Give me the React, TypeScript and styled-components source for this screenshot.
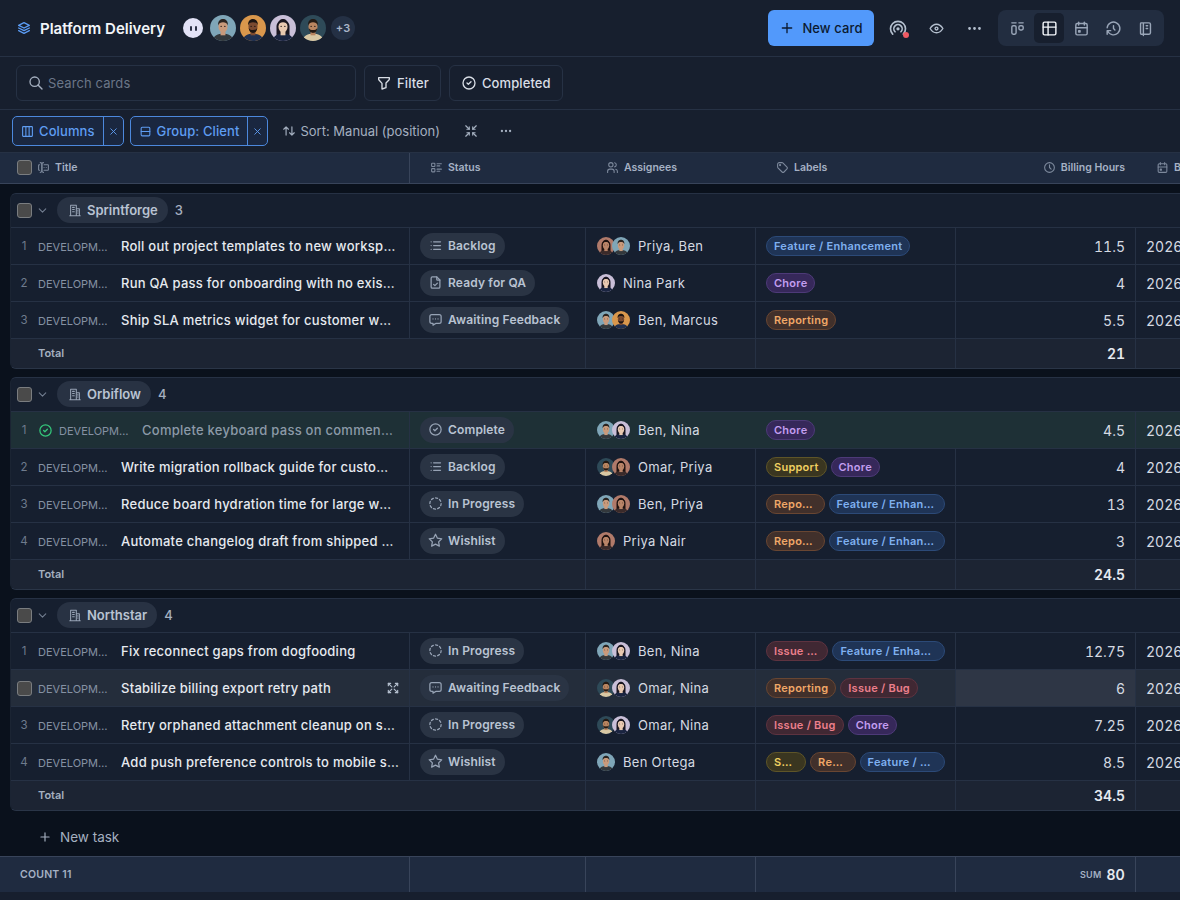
import React from "react";
import styled, { createGlobalStyle } from "styled-components";
import {
  TbArrowsMaximize,
  TbArrowsMinimize,
  TbArrowsSort,
  TbBroadcast,
  TbCalendarEvent,
  TbChevronDown,
  TbCircleCheck,
  TbCircleDashed,
  TbClock,
  TbColumns3,
  TbDots,
  TbEye,
  TbFileCheck,
  TbFilter,
  TbForms,
  TbHistory,
  TbLayoutKanban,
  TbLayoutRows,
  TbList,
  TbListDetails,
  TbMessageDots,
  TbNotebook,
  TbPlus,
  TbSearch,
  TbStack2,
  TbStar,
  TbTable,
  TbTag,
  TbUsers,
  TbX,
} from "react-icons/tb";

const GRID = "400px 176px 170px 200px 180px 240px";
const line = "#263144";

const GlobalStyle = createGlobalStyle`
  html, body { margin: 0; height: 100%; background: #171f2e; }
  body { font-family: Inter, "Liberation Sans", sans-serif; overflow: hidden; }
  * { box-sizing: border-box; }
`;

const Page = styled.div`
  width: 1180px;
  height: 900px;
  display: flex;
  flex-direction: column;
  background: #171f2e;
  color: #e4e8ef;
  overflow: hidden;
`;

const TopBar = styled.header`
  height: 57px;
  flex: none;
  display: flex;
  align-items: center;
  padding: 0 16px;
  border-bottom: 1px solid ${line};
`;

const BoardTitle = styled.h1`
  display: flex;
  align-items: center;
  gap: 8px;
  margin: 0;
  font-size: 15px;
  font-weight: 600;
  color: #f2f5f9;
  svg { color: #5b9cf5; }
`;

const People = styled.div`
  display: flex;
  align-items: center;
  gap: 4px;
  margin-left: 18px;
`;

const Bot = styled.span`
  width: 20px;
  height: 20px;
  margin-right: 3px;
  border-radius: 50%;
  background: #e2e2f6;
  display: flex;
  align-items: center;
  justify-content: center;
  gap: 3px;
  i { width: 2px; height: 5px; border-radius: 1px; background: #2b3045; }
`;

const MoreCount = styled.span`
  width: 24px;
  height: 24px;
  margin-left: 1px;
  border-radius: 50%;
  background: #243044;
  color: #a9b5c8;
  font-size: 11px;
  font-weight: 600;
  display: flex;
  align-items: center;
  justify-content: center;
`;

const TopActions = styled.div`
  margin-left: auto;
  display: flex;
  align-items: center;
`;

const PrimaryButton = styled.button`
  width: 106px;
  height: 36px;
  margin-right: 5px;
  border: 0;
  border-radius: 6px;
  background: #5299fb;
  color: #0b1a30;
  font: 500 13px Inter, sans-serif;
  letter-spacing: 0.1px;
  display: flex;
  align-items: center;
  justify-content: center;
  gap: 7px;
`;

const IconButton = styled.span`
  width: 38px;
  height: 36px;
  position: relative;
  display: flex;
  align-items: center;
  justify-content: center;
  color: #b4bfce;
`;

const LiveDot = styled.i`
  position: absolute;
  right: 8px;
  bottom: 8px;
  width: 6px;
  height: 6px;
  border-radius: 50%;
  background: #ef5a63;
`;

const ViewSwitch = styled.div`
  width: 166px;
  height: 36px;
  margin-left: 5px;
  padding: 0 4px;
  border-radius: 8px;
  background: #222d40;
  display: flex;
  align-items: center;
  gap: 2px;
`;

const ViewTab = styled.span<{ $active?: boolean }>`
  width: 30px;
  height: 30px;
  border-radius: 5px;
  display: flex;
  align-items: center;
  justify-content: center;
  background: ${(p) => (p.$active ? "#171f2e" : "transparent")};
  color: ${(p) => (p.$active ? "#f2f5f9" : "#9aa6b8")};
`;

const SearchBar = styled.div`
  height: 53px;
  flex: none;
  display: flex;
  align-items: center;
  gap: 8px;
  padding: 0 16px;
  border-bottom: 1px solid ${line};
`;

const SearchField = styled.div`
  width: 340px;
  height: 36px;
  padding: 0 11px;
  border: 1px solid ${line};
  border-radius: 6px;
  display: flex;
  align-items: center;
  gap: 4px;
  color: #a5b0c0;
  font-size: 13px;
  letter-spacing: 0.1px;
  span { color: #6b7688; }
`;

const GhostButton = styled.button`
  height: 36px;
  padding: 0 11px;
  border: 1px solid ${line};
  border-radius: 6px;
  background: transparent;
  color: #d9dee6;
  font: 500 13px Inter, sans-serif;
  letter-spacing: 0.1px;
  display: flex;
  align-items: center;
  gap: 5px;
`;

const ViewBar = styled.div`
  height: 42px;
  flex: none;
  display: flex;
  align-items: center;
  padding: 0 12px;
`;

const Chip = styled.div`
  height: 30px;
  margin-right: 6px;
  border: 1px solid #4c88dd;
  border-radius: 5px;
  background: #1a2740;
  color: #5f9df2;
  display: flex;
  align-items: stretch;
  font-size: 13px;
  font-weight: 500;
  letter-spacing: 0.1px;
`;

const ChipLabel = styled.span`
  display: flex;
  align-items: center;
  gap: 5px;
  padding: 0 8px;
  border-right: 1px solid #4c88dd;
`;

const ChipClose = styled.span`
  width: 19px;
  display: flex;
  align-items: center;
  justify-content: center;
`;

const SortLabel = styled.span`
  display: flex;
  align-items: center;
  gap: 4px;
  margin-left: 8px;
  color: #a5b0c0;
  font-size: 13px;
`;

const BarIcon = styled.span<{ $left: number }>`
  display: flex;
  margin-left: ${(p) => p.$left}px;
  color: #a5b0c0;
`;

const GridRow = styled.div`
  display: grid;
  grid-template-columns: ${GRID};
  width: 1200px;
`;

const HeaderRow = styled(GridRow)`
  flex: none;
  width: 100%;
  height: 32px;
  padding-left: 10px;
  background: #1f2b40;
  border-top: 1px solid ${line};
  border-bottom: 1px solid #38445a;
`;

const HeaderCell = styled.div<{ $right?: boolean; $pad: number; $divider?: boolean }>`
  display: flex;
  align-items: center;
  justify-content: ${(p) => (p.$right ? "flex-end" : "flex-start")};
  gap: 5px;
  padding: ${(p) => (p.$right ? `0 10px 1px 0` : `0 0 1px ${p.$pad}px`)};
  color: #a5b1c4;
  font-size: 10.5px;
  font-weight: 600;
  white-space: nowrap;
  border-right: 1px solid ${(p) => (p.$divider ? "#38445a" : "transparent")};
  svg { color: #7d899c; flex: none; }
`;

const Checkbox = styled.span`
  width: 15px;
  height: 15px;
  flex: none;
  border: 1px solid #7a7d80;
  border-radius: 3px;
  background: #4a4a4a;
`;

const Board = styled.main`
  flex: 1;
  min-height: 0;
  padding: 9px 0 0 10px;
  background: #0a111c;
  display: flex;
  flex-direction: column;
  gap: 8px;
  overflow: hidden;
`;

const GroupBox = styled.section`
  width: 1200px;
  border-top: 1px solid ${line};
  border-bottom: 1px solid #2a3547;
  border-left: 1px solid #1b2433;
  border-radius: 6px 0 0 6px;
  background: #161f2f;
  overflow: hidden;
`;

const GroupHead = styled.div`
  height: 34px;
  display: flex;
  align-items: center;
  padding: 0 0 1px 6px;
  border-bottom: 1px solid ${line};
  color: #a5b0c0;
  font-size: 13px;
  font-weight: 500;
`;

const Collapse = styled.span`
  display: flex;
  margin: 0 8px 0 4px;
  color: #727e90;
`;

const ClientPill = styled.span`
  height: 26px;
  padding: 0 10px 0 11px;
  margin-right: 7px;
  border-radius: 13px;
  background: #283243;
  color: #b9c3d2;
  font-weight: 600;
  display: flex;
  align-items: center;
  gap: 5px;
  svg { color: #97a3b5; }
`;

const RowShell = styled(GridRow)<{ $state?: "done" | "hover" }>`
  height: 37px;
  margin-left: -1px;
  border-bottom: 1px solid ${line};
  background: ${(p) =>
    p.$state === "done" ? "#1e3036" : p.$state === "hover" ? "#242d3b" : "#161f2f"};
`;

const Cell = styled.div<{ $hideLine?: boolean; $focus?: boolean }>`
  min-width: 0;
  display: flex;
  align-items: center;
  border-right: 1px solid ${(p) => (p.$hideLine ? "transparent" : line)};
  background: ${(p) => (p.$focus ? "#2e3645" : "transparent")};
`;

const TitleCell = styled(Cell)`
  padding-right: 10px;
`;

const RowIndex = styled.span`
  width: 28px;
  flex: none;
  text-align: center;
  color: #6f7b8d;
  font-size: 11.5px;
`;

const HoverBox = styled.span`
  width: 28px;
  flex: none;
  display: flex;
  justify-content: flex-end;
  padding-right: 6px;
`;

const DoneMark = styled.span`
  display: flex;
  width: 21px;
  flex: none;
  color: #34c77b;
`;

const CardKey = styled.span`
  width: 72px;
  flex: none;
  margin-right: 11px;
  padding-top: 2px;
  overflow: hidden;
  white-space: nowrap;
  text-overflow: ellipsis;
  color: #8591a3;
  font-size: 11px;
`;

const CardTitle = styled.span<{ $muted?: boolean }>`
  min-width: 0;
  flex: 1;
  padding-right: ${(p) => (p.$muted ? 3 : 0)}px;
  overflow: hidden;
  white-space: nowrap;
  text-overflow: ellipsis;
  font-size: 13px;
  font-weight: 500;
  letter-spacing: 0.25px;
  color: ${(p) => (p.$muted ? "#8c9aa8" : "#e6eaf0")};
`;

const ExpandIcon = styled.span`
  display: flex;
  flex: none;
  margin-left: 8px;
  margin-right: -1px;
  color: #b4bfce;
`;

const StatusCell = styled(Cell)`
  padding-left: 10px;
`;

const StatusPill = styled.span`
  height: 26px;
  margin-top: -1px;
  padding: 0 9px 0 8px;
  border-radius: 13px;
  background: #2a3444;
  color: #b9c3d2;
  font-size: 12px;
  font-weight: 600;
  letter-spacing: 0.15px;
  white-space: nowrap;
  display: flex;
  align-items: center;
  gap: 5px;
  svg { color: #97a3b5; }
`;

const AssigneeCell = styled(Cell)`
  padding-left: 11px;
  gap: 8px;
  color: #d5dae2;
  font-size: 13px;
  letter-spacing: 0.3px;
`;

const AvatarStack = styled.span`
  display: flex;
  svg + svg { margin-left: -3px; }
`;

const Face = styled.svg<{ $size: number }>`
  width: ${(p) => p.$size}px;
  height: ${(p) => p.$size}px;
  flex: none;
  border-radius: 50%;
  display: block;
`;

const LabelCell = styled(Cell)`
  padding: 0 10px;
  gap: 4px;
  overflow: hidden;
`;

const toneMap = {
  blue: ["#1f3456", "#2c4a78", "#7fb0f0"],
  purple: ["#36285a", "#4d3a78", "#c39ef0"],
  orange: ["#41302b", "#694632", "#f0a868"],
  yellow: ["#3a3620", "#5e5528", "#f0d060"],
  red: ["#402833", "#5e3340", "#ec7f8c"],
};
type Tone = keyof typeof toneMap;

const Label = styled.span<{ $tone: Tone }>`
  min-width: 0;
  height: 20px;
  padding: 0 7px;
  border: 1px solid ${(p) => toneMap[p.$tone][1]};
  border-radius: 10px;
  background: ${(p) => toneMap[p.$tone][0]};
  color: ${(p) => toneMap[p.$tone][2]};
  font-size: 11px;
  font-weight: 600;
  line-height: 18px;
  letter-spacing: 0.25px;
  overflow: hidden;
  white-space: nowrap;
  text-overflow: ellipsis;
`;

const NumberCell = styled(Cell)`
  justify-content: flex-end;
  padding-right: 10px;
  color: #d5dae2;
  font-size: 14px;
  font-variant-numeric: tabular-nums;
`;

const DateCell = styled(Cell)`
  padding-left: 10px;
  color: #d5dae2;
  font-size: 14px;
  font-variant-numeric: tabular-nums;
  white-space: nowrap;
`;

const TotalRow = styled(GridRow)`
  height: 29px;
  margin-left: -1px;
  background: #1c2433;
`;

const TotalLabel = styled(Cell)`
  padding: 0 0 1px 28px;
  color: #a5b0c0;
  font-size: 11px;
  font-weight: 600;
`;

const TotalValue = styled(NumberCell)`
  padding-bottom: 1px;
  color: #e6eaf0;
  font-weight: 600;
`;

const NewTask = styled.div`
  display: flex;
  align-items: center;
  gap: 8px;
  height: 20px;
  margin: 8px 0 0 28px;
  color: #a5b0c0;
  font-size: 13.5px;
`;

const SummaryRow = styled(GridRow)`
  flex: none;
  width: 100%;
  height: 36px;
  padding-left: 10px;
  background: #1f2b40;
  border-top: 1px solid #38445a;
`;

const SummaryCell = styled.div<{ $right?: boolean }>`
  display: flex;
  align-items: center;
  justify-content: ${(p) => (p.$right ? "flex-end" : "flex-start")};
  gap: 5px;
  padding: ${(p) => (p.$right ? "0 10px 0 0" : "0 0 0 10px")};
  border-right: 1px solid #38445a;
  color: #a5b1c4;
  font-size: 10.5px;
  font-weight: 600;
  letter-spacing: 0.2px;
  b { color: #e6eaf0; font-size: 14px; font-weight: 600; }
`;

const SumTag = styled.span`
  font-size: 9px;
`;

const BottomGap = styled.div`
  height: 8px;
  flex: none;
`;

type PersonKey = "ben" | "marcus" | "nina" | "omar" | "priya";

const people: Record<
  PersonKey,
  { bg: string; skin: string; hair: string; shirt: string; long?: boolean; beard?: boolean }
> = {
  ben: { bg: "#7fa6b8", skin: "#c99a7b", hair: "#2b2420", shirt: "#33383c" },
  marcus: { bg: "#d9974c", skin: "#7a4a30", hair: "#1c1512", shirt: "#1f3050", beard: true },
  nina: { bg: "#c9bfd8", skin: "#e8c8b0", hair: "#1a1620", shirt: "#1a2440", long: true },
  omar: { bg: "#2e4a58", skin: "#b98560", hair: "#231a14", shirt: "#d9c8a4", beard: true },
  priya: { bg: "#b07a6a", skin: "#b98468", hair: "#1e1210", shirt: "#3a2a2a", long: true },
};

function Avatar({ who, size = 18 }: { who: PersonKey; size?: number }) {
  const p = people[who];
  return (
    <Face $size={size} viewBox="0 0 32 32">
      <rect width="32" height="32" fill={p.bg} />
      {p.long && <path d="M8 14c0-10 16-10 16 0v12H8z" fill={p.hair} />}
      <path d="M3 32c1-7 7-9 13-9s12 2 13 9z" fill={p.shirt} />
      <rect x="13" y="19" width="6" height="6" fill={p.skin} />
      <ellipse cx="16" cy="14.5" rx="5.6" ry="7" fill={p.skin} />
      <path d="M10 13c-.5-6 3-8 6-8s6.500 2 6 8c-1-3-3-4-6-4s-5 1-6 4z" fill={p.hair} />
      {p.beard && <path d="M10.800 16c.5 5 3 6 5.200 6s4.700-1 5.200-6c-1 2-3 2.500-5.200 2.500s-4.200-.5-5.200-2.500z" fill={p.hair} />}
      <circle cx="13.700" cy="14" r=".8" fill="#1a1412" />
      <circle cx="18.300" cy="14" r=".8" fill="#1a1412" />
    </Face>
  );
}

// tall block with a lower wing, same weight as the tabler icons around it
function ClientIcon() {
  return (
    <svg width="14" height="14" viewBox="0 0 16 16" fill="none" stroke="currentColor" strokeWidth="1.2" strokeLinecap="round" strokeLinejoin="round">
      <path d="M2 14.500h12M3 14.500V2.500h6.500v12M9.500 6.500H13v8" />
      <path d="M5.200 5h2M5.200 7.500h2M5.200 10h2M11 9h.5M11 11.500h.5" />
    </svg>
  );
}

const statusIcons = {
  Backlog: <TbList size={15} />,
  "Ready for QA": <TbFileCheck size={15} />,
  "Awaiting Feedback": <TbMessageDots size={15} />,
  Complete: <TbCircleCheck size={15} />,
  "In Progress": <TbCircleDashed size={15} />,
  Wishlist: <TbStar size={15} />,
};
type Status = keyof typeof statusIcons;

type Card = {
  title: string;
  status: Status;
  who: PersonKey[];
  names: string;
  labels: [string, Tone][];
  hours: string;
  date: string;
  state?: "done" | "hover";
};

const FEATURE: [string, Tone] = ["Feature / Enhancement", "blue"];
const CHORE: [string, Tone] = ["Chore", "purple"];
const REPORTING: [string, Tone] = ["Reporting", "orange"];
const SUPPORT: [string, Tone] = ["Support", "yellow"];
const BUG: [string, Tone] = ["Issue / Bug", "red"];

const groups: { client: string; total: string; cards: Card[] }[] = [
  {
    client: "Sprintforge",
    total: "21",
    cards: [
      { title: "Roll out project templates to new workspaces", status: "Backlog", who: ["priya", "ben"], names: "Priya, Ben", labels: [FEATURE], hours: "11.5", date: "2026-02-03" },
      { title: "Run QA pass for onboarding with no existing data", status: "Ready for QA", who: ["nina"], names: "Nina Park", labels: [CHORE], hours: "4", date: "2026-02-05" },
      { title: "Ship SLA metrics widget for customer workspaces", status: "Awaiting Feedback", who: ["ben", "marcus"], names: "Ben, Marcus", labels: [REPORTING], hours: "5.5", date: "2026-02-09" },
    ],
  },
  {
    client: "Orbiflow",
    total: "24.5",
    cards: [
      { title: "Complete keyboard pass on comment threads", status: "Complete", who: ["ben", "nina"], names: "Ben, Nina", labels: [CHORE], hours: "4.5", date: "2026-01-28", state: "done" },
      { title: "Write migration rollback guide for customer admins", status: "Backlog", who: ["omar", "priya"], names: "Omar, Priya", labels: [SUPPORT, CHORE], hours: "4", date: "2026-02-10" },
      { title: "Reduce board hydration time for large workspaces", status: "In Progress", who: ["ben", "priya"], names: "Ben, Priya", labels: [REPORTING, FEATURE], hours: "13", date: "2026-02-12" },
      { title: "Automate changelog draft from shipped cards and notes", status: "Wishlist", who: ["priya"], names: "Priya Nair", labels: [REPORTING, FEATURE], hours: "3", date: "2026-02-16" },
    ],
  },
  {
    client: "Northstar",
    total: "34.5",
    cards: [
      { title: "Fix reconnect gaps from dogfooding", status: "In Progress", who: ["ben", "nina"], names: "Ben, Nina", labels: [BUG, FEATURE], hours: "12.75", date: "2026-02-04" },
      { title: "Stabilize billing export retry path", status: "Awaiting Feedback", who: ["omar", "nina"], names: "Omar, Nina", labels: [REPORTING, BUG], hours: "6", date: "2026-02-06", state: "hover" },
      { title: "Retry orphaned attachment cleanup on sync failure", status: "In Progress", who: ["omar", "nina"], names: "Omar, Nina", labels: [BUG, CHORE], hours: "7.25", date: "2026-02-11" },
      { title: "Add push preference controls to mobile settings", status: "Wishlist", who: ["ben"], names: "Ben Ortega", labels: [SUPPORT, REPORTING, FEATURE], hours: "8.5", date: "2026-02-18" },
    ],
  },
];

function CardRow({ card, index }: { card: Card; index: number }) {
  const done = card.state === "done";
  const hover = card.state === "hover";
  return (
    <RowShell $state={card.state}>
      <TitleCell>
        {hover ? (
          <HoverBox>
            <Checkbox />
          </HoverBox>
        ) : (
          <RowIndex>{index + 1}</RowIndex>
        )}
        {done && (
          <DoneMark>
            <TbCircleCheck size={15} />
          </DoneMark>
        )}
        <CardKey>DEVELOPMENT</CardKey>
        <CardTitle $muted={done}>{card.title}</CardTitle>
        {hover && (
          <ExpandIcon>
            <TbArrowsMaximize size={14} />
          </ExpandIcon>
        )}
      </TitleCell>
      <StatusCell $hideLine={done}>
        <StatusPill>
          {statusIcons[card.status]}
          {card.status}
        </StatusPill>
      </StatusCell>
      <AssigneeCell $hideLine={done}>
        <AvatarStack>
          {card.who.map((w) => (
            <Avatar key={w} who={w} />
          ))}
        </AvatarStack>
        {card.names}
      </AssigneeCell>
      <LabelCell $hideLine={done}>
        {card.labels.map(([text, tone]) => (
          <Label key={text} $tone={tone}>
            {text}
          </Label>
        ))}
      </LabelCell>
      <NumberCell $focus={hover}>{card.hours}</NumberCell>
      <DateCell>{card.date}</DateCell>
    </RowShell>
  );
}

export default function App() {
  return (
    <Page>
      <GlobalStyle />
      <TopBar>
        <BoardTitle>
          <TbStack2 size={16} />
          Platform Delivery
        </BoardTitle>
        <People>
          <Bot>
            <i />
            <i />
          </Bot>
          <Avatar who="ben" size={26} />
          <Avatar who="marcus" size={26} />
          <Avatar who="nina" size={26} />
          <Avatar who="omar" size={26} />
          <MoreCount>+3</MoreCount>
        </People>
        <TopActions>
          <PrimaryButton>
            <TbPlus size={16} />
            New card
          </PrimaryButton>
          <IconButton>
            <TbBroadcast size={20} />
            <LiveDot />
          </IconButton>
          <IconButton>
            <TbEye size={17} />
          </IconButton>
          <IconButton>
            <TbDots size={17} />
          </IconButton>
          <ViewSwitch>
            <ViewTab>
              <TbLayoutKanban size={17} />
            </ViewTab>
            <ViewTab $active>
              <TbTable size={17} />
            </ViewTab>
            <ViewTab>
              <TbCalendarEvent size={17} />
            </ViewTab>
            <ViewTab>
              <TbHistory size={17} />
            </ViewTab>
            <ViewTab>
              <TbNotebook size={17} />
            </ViewTab>
          </ViewSwitch>
        </TopActions>
      </TopBar>

      <SearchBar>
        <SearchField>
          <TbSearch size={16} />
          <span>Search cards</span>
        </SearchField>
        <GhostButton>
          <TbFilter size={16} />
          Filter
        </GhostButton>
        <GhostButton>
          <TbCircleCheck size={16} />
          Completed
        </GhostButton>
      </SearchBar>

      <ViewBar>
        <Chip>
          <ChipLabel>
            <TbColumns3 size={13} />
            Columns
          </ChipLabel>
          <ChipClose>
            <TbX size={11} />
          </ChipClose>
        </Chip>
        <Chip>
          <ChipLabel>
            <TbLayoutRows size={13} />
            Group: Client
          </ChipLabel>
          <ChipClose>
            <TbX size={11} />
          </ChipClose>
        </Chip>
        <SortLabel>
          <TbArrowsSort size={14} />
          Sort: Manual (position)
        </SortLabel>
        <BarIcon $left={24}>
          <TbArrowsMinimize size={14} />
        </BarIcon>
        <BarIcon $left={21}>
          <TbDots size={14} />
        </BarIcon>
      </ViewBar>

      <HeaderRow>
        <HeaderCell $pad={7} $divider>
          <Checkbox />
          <TbForms size={13} />
          Title
        </HeaderCell>
        <HeaderCell $pad={20}>
          <TbListDetails size={13} />
          Status
        </HeaderCell>
        <HeaderCell $pad={20}>
          <TbUsers size={13} />
          Assignees
        </HeaderCell>
        <HeaderCell $pad={20}>
          <TbTag size={13} />
          Labels
        </HeaderCell>
        <HeaderCell $right $pad={0}>
          <TbClock size={13} />
          Billing Hours
        </HeaderCell>
        <HeaderCell $pad={20}>
          <TbCalendarEvent size={13} />
          Billing Date
        </HeaderCell>
      </HeaderRow>

      <Board>
        {groups.map((group) => (
          <GroupBox key={group.client}>
            <GroupHead>
              <Checkbox />
              <Collapse>
                <TbChevronDown size={13} />
              </Collapse>
              <ClientPill>
                <ClientIcon />
                {group.client}
              </ClientPill>
              {group.cards.length}
            </GroupHead>
            {group.cards.map((card, i) => (
              <CardRow key={card.title} card={card} index={i} />
            ))}
            <TotalRow>
              <TotalLabel $hideLine>Total</TotalLabel>
              <Cell />
              <Cell />
              <Cell />
              <TotalValue>{group.total}</TotalValue>
              <Cell />
            </TotalRow>
          </GroupBox>
        ))}
        <NewTask>
          <TbPlus size={14} />
          New task
        </NewTask>
      </Board>

      <SummaryRow>
        <SummaryCell>COUNT 11</SummaryCell>
        <SummaryCell />
        <SummaryCell />
        <SummaryCell />
        <SummaryCell $right>
          <SumTag>SUM</SumTag>
          <b>80</b>
        </SummaryCell>
        <SummaryCell />
      </SummaryRow>
      <BottomGap />
    </Page>
  );
}
